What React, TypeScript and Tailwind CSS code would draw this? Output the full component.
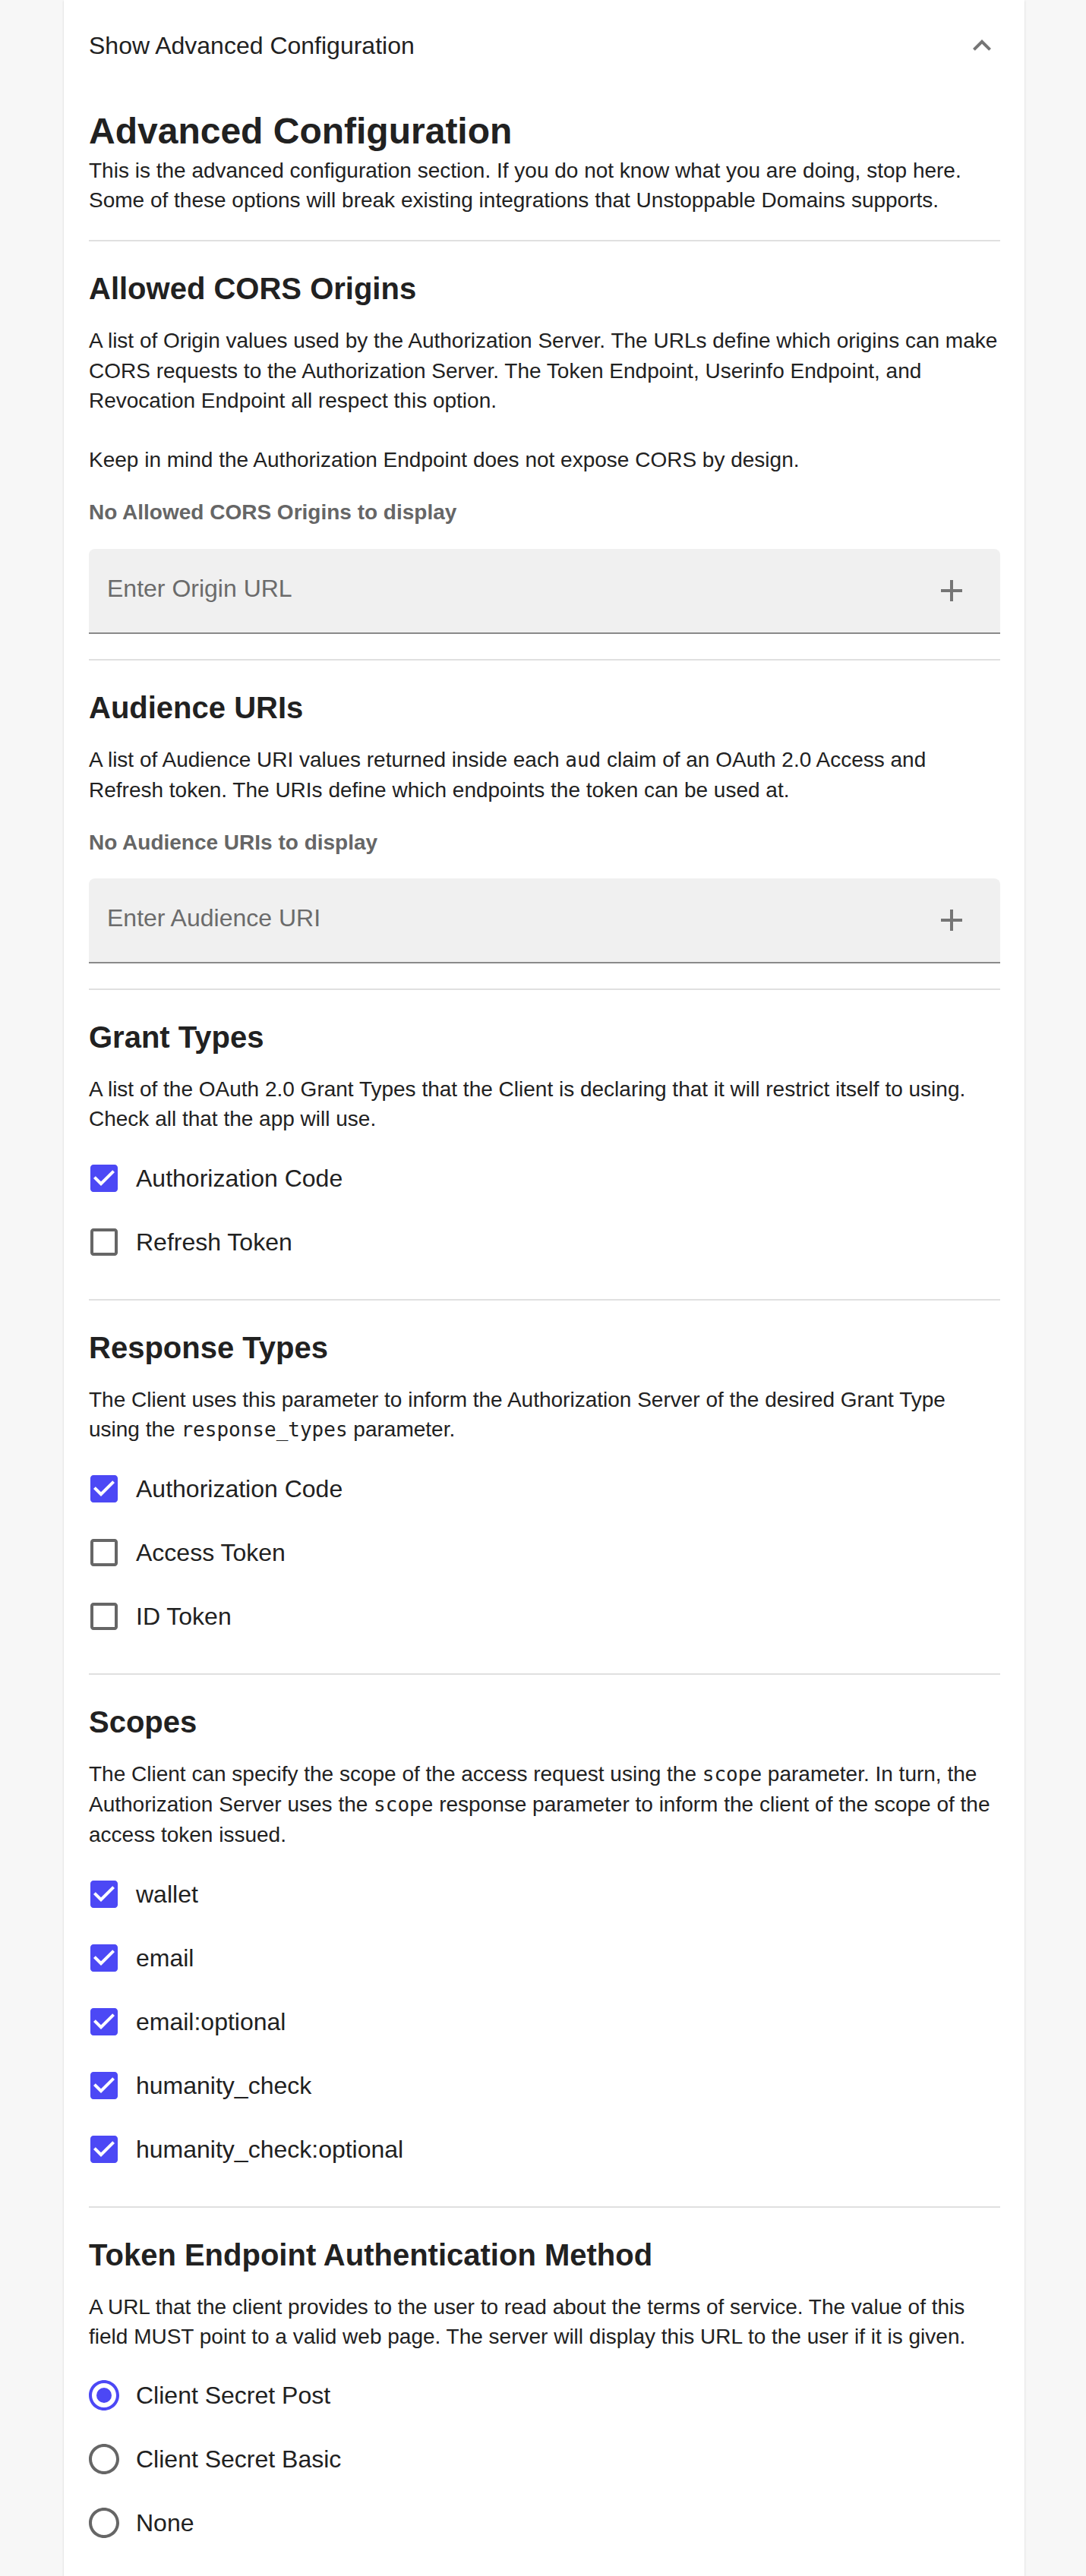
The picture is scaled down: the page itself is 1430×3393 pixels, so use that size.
import type { ReactNode } from "react";

const MONO = "font-['DejaVu_Sans_Mono',monospace] text-[26px]";

function Code({ children }: { children: ReactNode }) {
  return <code className={MONO}>{children}</code>;
}

function Divider() {
  return <div className="h-[2px] bg-[#e0e0e0]" />;
}

function Para({ lines }: { lines: ReactNode[] }) {
  return (
    <p className="whitespace-nowrap text-[28px] leading-[39.2px] text-[#212121]">
      {lines.map((line, i) => (
        <span key={i} className="block min-h-[39.2px]">
          {line}
        </span>
      ))}
    </p>
  );
}

function Empty({ children }: { children: ReactNode }) {
  return <p className="mt-[30px] text-[28px] font-bold leading-[39.2px] text-[#666666]">{children}</p>;
}

function AddField({ placeholder }: { placeholder: string }) {
  return (
    <div className="mt-[28px] flex h-[112px] items-center rounded-t-[8px] border-b-2 border-[#8a8a8a] bg-[#f0f0f0] pl-[24px] pr-[40px]">
      <span className="mb-[6px] flex-1 text-[32px] leading-[46px] text-[#6b6b6b]">{placeholder}</span>
      <svg viewBox="0 0 24 24" className="h-[48px] w-[48px] fill-[#757575]">
        <path d="M19 13h-6v6h-2v-6H5v-2h6V5h2v6h6v2z" />
      </svg>
    </div>
  );
}

function CheckIcon({ checked }: { checked: boolean }) {
  return checked ? (
    <svg viewBox="0 0 24 24" className="h-[48px] w-[48px] fill-[#4c48f5]">
      <path d="M19 3H5c-1.11 0-2 .9-2 2v14c0 1.1.89 2 2 2h14c1.11 0 2-.9 2-2V5c0-1.1-.89-2-2-2zm-9 14l-5-5 1.41-1.41L10 14.17l7.59-7.59L19 8l-9 9z" />
    </svg>
  ) : (
    <svg viewBox="0 0 24 24" className="h-[48px] w-[48px] fill-[#666666]">
      <path d="M19 5v14H5V5h14m0-2H5c-1.1 0-2 .9-2 2v14c0 1.1.9 2 2 2h14c1.1 0 2-.9 2-2V5c0-1.1-.9-2-2-2z" />
    </svg>
  );
}

function RadioIcon({ checked }: { checked: boolean }) {
  return (
    <svg viewBox="0 0 24 24" className={`h-[48px] w-[48px] ${checked ? "fill-[#4c48f5]" : "fill-[#666666]"}`}>
      <path d="M12 2C6.48 2 2 6.48 2 12s4.48 10 10 10 10-4.48 10-10S17.52 2 12 2zm0 18c-4.42 0-8-3.58-8-8s3.58-8 8-8 8 3.58 8 8-3.58 8-8 8z" />
      {checked && <circle cx="12" cy="12" r="5" />}
    </svg>
  );
}

function Options({ items, radio = false }: { items: { label: string; checked: boolean }[]; radio?: boolean }) {
  return (
    <div className="mt-[16px] flex flex-col">
      {items.map((item) => (
        <label key={item.label} className="flex h-[84px] items-center">
          <span className="-ml-[4px]">
            {radio ? <RadioIcon checked={item.checked} /> : <CheckIcon checked={item.checked} />}
          </span>
          <span className="ml-[18px] text-[32px] leading-[48px] text-[#212121]">{item.label}</span>
        </label>
      ))}
    </div>
  );
}

function Section({ title, children }: { title: string; children: ReactNode }) {
  return (
    <section>
      <Divider />
      <div className="pt-[38px] pb-[33px]">
        <h2 className="text-[40px] font-bold leading-[48px] text-[#212121]">{title}</h2>
        <div className="mt-[25px]">{children}</div>
      </div>
    </section>
  );
}

export default function App() {
  return (
    <div className="min-h-screen bg-[#f7f7f7] font-['Liberation_Sans',Arial,sans-serif]">
      <div className="ml-[84px] w-[1265px] bg-white pl-[33px] pr-[32px] shadow-[0_1px_3px_rgba(0,0,0,0.12),0_1px_1px_rgba(0,0,0,0.08)]">
        <div className="flex h-[120px] items-center justify-between">
          <span className="text-[32px] leading-[48px] text-[#212121]">Show Advanced Configuration</span>
          <svg viewBox="0 0 24 24" className="h-[48px] w-[48px] fill-[#757575]">
            <path d="M12 8l-6 6 1.41 1.41L12 10.83l4.59 4.58L18 14z" />
          </svg>
        </div>

        <div className="pt-[21px] pb-[33px]">
          <h1 className="text-[48px] font-bold leading-[64px] text-[#212121]">Advanced Configuration</h1>
          <Para
            lines={[
              "This is the advanced configuration section. If you do not know what you are doing, stop here.",
              "Some of these options will break existing integrations that Unstoppable Domains supports.",
            ]}
          />
        </div>

        <Section title="Allowed CORS Origins">
          <Para
            lines={[
              "A list of Origin values used by the Authorization Server. The URLs define which origins can make",
              "CORS requests to the Authorization Server. The Token Endpoint, Userinfo Endpoint, and",
              "Revocation Endpoint all respect this option.",
              "",
              "Keep in mind the Authorization Endpoint does not expose CORS by design.",
            ]}
          />
          <Empty>No Allowed CORS Origins to display</Empty>
          <AddField placeholder="Enter Origin URL" />
        </Section>

        <Section title="Audience URIs">
          <Para
            lines={[
              <>
                A list of Audience URI values returned inside each <Code>aud</Code> claim of an OAuth 2.0 Access and
              </>,
              "Refresh token. The URIs define which endpoints the token can be used at.",
            ]}
          />
          <Empty>No Audience URIs to display</Empty>
          <AddField placeholder="Enter Audience URI" />
        </Section>

        <Section title="Grant Types">
          <Para
            lines={[
              "A list of the OAuth 2.0 Grant Types that the Client is declaring that it will restrict itself to using.",
              "Check all that the app will use.",
            ]}
          />
          <Options
            items={[
              { label: "Authorization Code", checked: true },
              { label: "Refresh Token", checked: false },
            ]}
          />
        </Section>

        <Section title="Response Types">
          <Para
            lines={[
              "The Client uses this parameter to inform the Authorization Server of the desired Grant Type",
              <>
                using the <Code>response_types</Code> parameter.
              </>,
            ]}
          />
          <Options
            items={[
              { label: "Authorization Code", checked: true },
              { label: "Access Token", checked: false },
              { label: "ID Token", checked: false },
            ]}
          />
        </Section>

        <Section title="Scopes">
          <Para
            lines={[
              <>
                The Client can specify the scope of the access request using the <Code>scope</Code> parameter. In turn, the
              </>,
              <>
                Authorization Server uses the <Code>scope</Code> response parameter to inform the client of the scope of the
              </>,
              "access token issued.",
            ]}
          />
          <Options
            items={[
              { label: "wallet", checked: true },
              { label: "email", checked: true },
              { label: "email:optional", checked: true },
              { label: "humanity_check", checked: true },
              { label: "humanity_check:optional", checked: true },
            ]}
          />
        </Section>

        <Section title="Token Endpoint Authentication Method">
          <Para
            lines={[
              "A URL that the client provides to the user to read about the terms of service. The value of this",
              "field MUST point to a valid web page. The server will display this URL to the user if it is given.",
            ]}
          />
          <Options
            radio
            items={[
              { label: "Client Secret Post", checked: true },
              { label: "Client Secret Basic", checked: false },
              { label: "None", checked: false },
            ]}
          />
        </Section>
      </div>
    </div>
  );
}
